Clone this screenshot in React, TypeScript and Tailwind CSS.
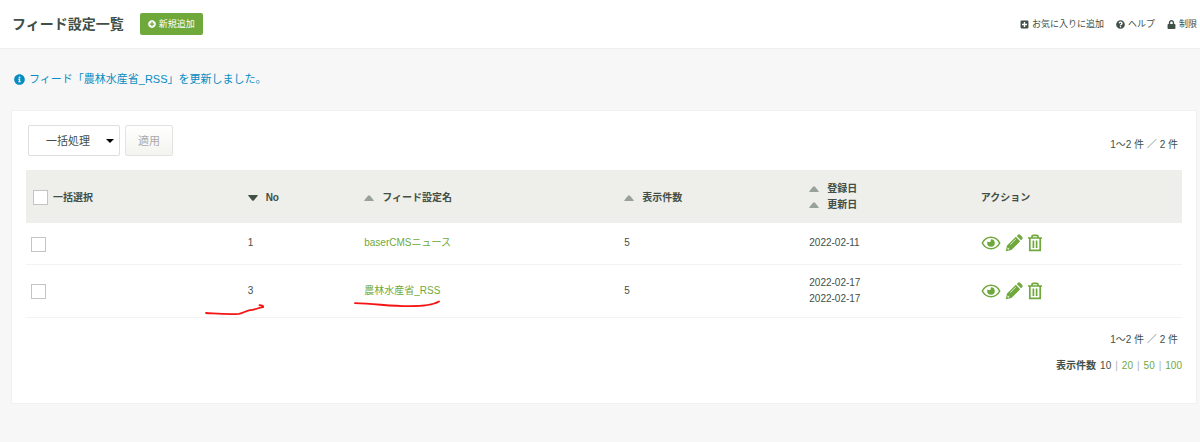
import type { ReactNode } from 'react';
import { FaInfoCircle, FaLock, FaPlusCircle, FaPlusSquare, FaQuestionCircle } from 'react-icons/fa';

interface Feed {
  no: number;
  name: string;
  count: number;
  dates: string[];
}

const feeds: Feed[] = [
  { no: 1, name: 'baserCMSニュース', count: 5, dates: ['2022-02-11'] },
  { no: 3, name: '農林水産省_RSS', count: 5, dates: ['2022-02-17', '2022-02-17'] },
];

const limits = [20, 50, 100];

const EyeIcon = () => (
  <svg viewBox="0 0 20 14" className="h-3.5 w-5" aria-hidden="true">
    <path d="M1.3 7C3.3 3.2 6.3 1.3 10 1.3S16.7 3.2 18.7 7C16.7 10.8 13.7 12.7 10 12.7S3.3 10.8 1.3 7Z" fill="none" stroke="currentColor" strokeWidth="1.6" />
    <path d="M10 3.2A3.8 3.8 0 1 1 6.2 7C6.2 6.3 6.4 5.7 6.7 5.2C7.2 6.3 9.3 6.5 9.7 5.2C9.9 4.5 9.5 3.6 10 3.2Z" fill="currentColor" />
  </svg>
);

const PencilIcon = () => (
  <svg viewBox="0 0 18 18" className="size-4.5" aria-hidden="true">
    <path
      d="M.8 17.2L2 11.6L10.8 2.8L15.2 7.2L6.4 16ZM11.8 1.9L13 .8Q14.1 -.1 15.2 .9L17.1 2.8Q18 3.9 17.2 5L16.1 6.2Z"
      fill="currentColor"
    />
    <path d="M5.2 10.6L10.8 5" stroke="#fff" strokeWidth=".8" />
    <path d="M2.8 13.4L4.6 15.2L3.1 15.6L2.4 14.9Z" fill="#fff" />
  </svg>
);

const TrashIcon = () => (
  <svg viewBox="0 0 16 18" className="h-4.5 w-4" fill="none" stroke="currentColor" strokeWidth="1.7" aria-hidden="true">
    <path d="M1 4H15M5 4V2.5Q5 1.3 6.2 1.3H9.8Q11 1.3 11 2.5V4M2.8 4V16.3H13.2V4M6.4 6.5V14M9.6 6.5V14" />
  </svg>
);

const SortLink = ({ children, desc = false }: { children: ReactNode; desc?: boolean }) => (
  <a href="#" className="flex items-center gap-2">
    <svg viewBox="0 0 10 6" className={desc ? 'h-1.5 w-2.5 rotate-180' : 'h-1.5 w-2.5 text-[#98a29b]'} aria-hidden="true">
      <path d="M.5 6Q0 5.6 .5 5L4 .8Q5 -.2 6 .8L9.5 5Q10 5.6 9.500 6Z" fill="currentColor" />
    </svg>
    {children}
  </a>
);

// hand-drawn red marks over the highlighted row
const NoMark = () => (
  <svg viewBox="0 0 60 12" className="absolute -left-[41px] top-[39px] h-3 w-[60px]" fill="none" stroke="#f51414" strokeWidth="1.8" strokeLinecap="round" aria-hidden="true">
    <path d="M1 9C12 9.6 22 10.600 34 9.900C39 9 40 7 45 6.200C49 6 53 4 58 3.200C59 2 56 1 54.500 1.200" />
  </svg>
);

const NameMark = () => (
  <svg viewBox="0 0 88 8" className="absolute -left-[7px] top-[35px] h-2 w-[88px]" fill="none" stroke="#f51414" strokeWidth="1.8" strokeLinecap="round" aria-hidden="true">
    <path d="M1 3.200C20 3.500 36 6.200 54 6.200C68 6.300 79 5 85 1.500" />
  </svg>
);

const checkboxClass = 'block size-[15px] shrink-0 appearance-none border border-[#c4c4c4] bg-white checked:bg-[#6fa93c]';

const ResultCount = () => <p className="px-1 text-right">1〜2 件 ／ 2 件</p>;

const PageHeader = () => (
  <header className="flex h-[49px] items-center justify-between border-b border-[#efefef] bg-white pl-3 pr-[3px]">
    <div className="flex items-center gap-4">
      <h1 className="text-[14px] font-bold">フィード設定一覧</h1>
      <button type="button" className="flex h-[22px] items-center gap-[3px] rounded-xs bg-[#6fa93c] px-2 text-[9px] text-white">
        <FaPlusCircle className="size-2" />
        新規追加
      </button>
    </div>
    <nav className="flex gap-3 text-[9px]">
      <a href="#" className="flex items-center gap-[3px]">
        <FaPlusSquare className="size-[9px]" />
        お気に入りに追加
      </a>
      <a href="#" className="flex items-center gap-[3px]">
        <FaQuestionCircle className="size-[9px]" />
        ヘルプ
      </a>
      <a href="#" className="flex items-center gap-[3px]">
        <FaLock className="size-[9px]" />
        制限
      </a>
    </nav>
  </header>
);

const FeedTable = () => (
  <table className="w-full table-fixed text-left">
    <thead>
      <tr className="h-[53px] bg-[#eeeeea]">
        <th className="w-[19%] pl-[7px] pt-0.5">
          <label className="flex items-center gap-[5px]">
            <input type="checkbox" className={checkboxClass} />
            一括選択
          </label>
        </th>
        <th className="w-[10%] pl-0.5 pt-0.5"><SortLink desc>No</SortLink></th>
        <th className="w-[22.5%] pl-[3px] pt-0.5"><SortLink>フィード設定名</SortLink></th>
        <th className="w-[16%] pl-[3px] pt-0.5"><SortLink>表示件数</SortLink></th>
        <th className="w-[15%] pl-[3px] leading-4">
          <SortLink>登録日</SortLink>
          <SortLink>更新日</SortLink>
        </th>
        <th className="pl-px pt-0.5">アクション</th>
      </tr>
    </thead>
    <tbody>
      {feeds.map((feed) => (
        <tr key={feed.no} className="h-[41px] border-b border-[#f3f3f3]">
          <td className="pl-[5px] pt-0.5">
            <input type="checkbox" aria-label={`${feed.name}を選択`} className={checkboxClass} />
          </td>
          <td className="relative pl-0.5">
            {feed.no}
            {feed.no === 3 && <NoMark />}
          </td>
          <td className="relative pl-[3px]">
            <a href="#" className="text-[#6fa93c]">{feed.name}</a>
            {feed.no === 3 && <NameMark />}
          </td>
          <td className="pl-[3px]">{feed.count}</td>
          <td className="py-2.5 pl-[3px] leading-4">
            {feed.dates.map((date, i) => (
              <div key={i}>{date}</div>
            ))}
          </td>
          <td className="pl-px">
            <div className="flex h-5 items-center gap-1 text-[#6fa93c]">
              <button type="button" aria-label="確認"><EyeIcon /></button>
              <button type="button" aria-label="編集"><PencilIcon /></button>
              <button type="button" aria-label="削除"><TrashIcon /></button>
            </div>
          </td>
        </tr>
      ))}
    </tbody>
  </table>
);

export default function App() {
  return (
    <div className="min-h-screen bg-[#f7f7f7] font-['Liberation_Sans','Noto_Sans_CJK_JP',sans-serif] text-[10px] leading-4 text-[#414f46]">
      <PageHeader />
      <p className="flex items-center gap-1 px-3.5 pt-[22px] text-[11px] text-[#078cc2]">
        <FaInfoCircle className="size-[11px]" />
        フィード「農林水産省_RSS」を更新しました。
      </p>
      <main className="ml-[11px] mr-[3px] mt-[23px] border border-[#f1f1f1] bg-white px-3.5 pb-[29px] pt-3.5">
        <div className="flex items-center justify-between">
          <div className="flex gap-[5px] pl-0.5 text-[11px]">
            <div className="relative">
              <select aria-label="一括処理" className="h-[31px] w-[92px] appearance-none rounded-xs border border-[#dedede] bg-white pl-[17px]">
                <option>一括処理</option>
              </select>
              <svg viewBox="0 0 8 4" className="pointer-events-none absolute right-1.5 top-3.5 h-1 w-2 text-black" aria-hidden="true">
                <path d="M0 0H8L4 4Z" fill="currentColor" />
              </svg>
            </div>
            <button type="button" disabled className="h-[31px] w-12 rounded-xs border border-[#e2e2e0] bg-linear-to-b from-white to-[#f3f3ef] text-[#aaa]">
              適用
            </button>
          </div>
          <div className="pt-2"><ResultCount /></div>
        </div>
        <div className="mt-3.5">
          <FeedTable />
        </div>
        <div className="mt-3.5"><ResultCount /></div>
        <div className="mt-2.5 flex justify-end gap-1">
          <strong>表示件数</strong>
          <span>10</span>
          {limits.map((limit) => (
            <span key={limit} className="flex gap-1">
              <span className="text-[#a9b5b5]">|</span>
              <a href="#" className="text-[#6fa93c]">{limit}</a>
            </span>
          ))}
        </div>
      </main>
    </div>
  );
}
